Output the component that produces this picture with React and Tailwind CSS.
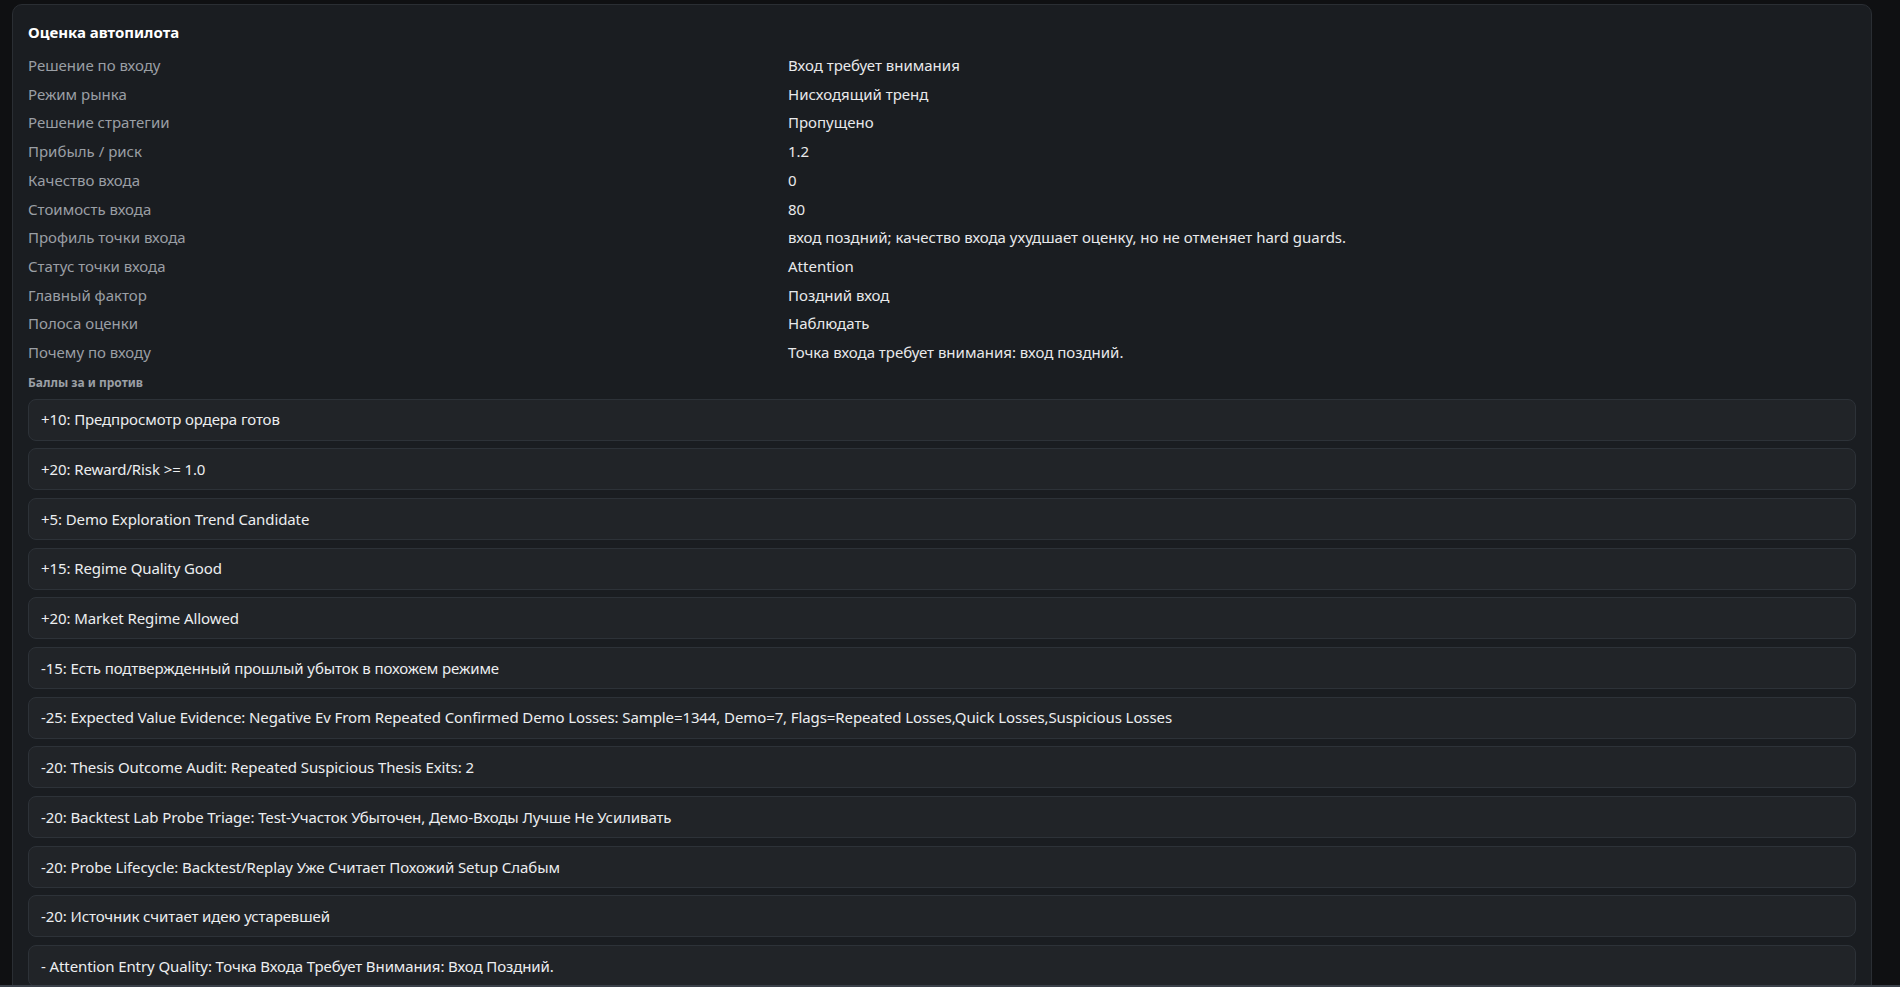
const rows = [
  ['Решение по входу', 'Вход требует внимания'],
  ['Режим рынка', 'Нисходящий тренд'],
  ['Решение стратегии', 'Пропущено'],
  ['Прибыль / риск', '1.2'],
  ['Качество входа', '0'],
  ['Стоимость входа', '80'],
  ['Профиль точки входа', 'вход поздний; качество входа ухудшает оценку, но не отменяет hard guards.'],
  ['Статус точки входа', 'Attention'],
  ['Главный фактор', 'Поздний вход'],
  ['Полоса оценки', 'Наблюдать'],
  ['Почему по входу', 'Точка входа требует внимания: вход поздний.'],
];

const scores = [
  '+10: Предпросмотр ордера готов',
  '+20: Reward/Risk >= 1.0',
  '+5: Demo Exploration Trend Candidate',
  '+15: Regime Quality Good',
  '+20: Market Regime Allowed',
  '-15: Есть подтвержденный прошлый убыток в похожем режиме',
  '-25: Expected Value Evidence: Negative Ev From Repeated Confirmed Demo Losses: Sample=1344, Demo=7, Flags=Repeated Losses,Quick Losses,Suspicious Losses',
  '-20: Thesis Outcome Audit: Repeated Suspicious Thesis Exits: 2',
  '-20: Backtest Lab Probe Triage: Test-Участок Убыточен, Демо-Входы Лучше Не Усиливать',
  '-20: Probe Lifecycle: Backtest/Replay Уже Считает Похожий Setup Слабым',
  '-20: Источник считает идею устаревшей',
  '- Attention Entry Quality: Точка Входа Требует Внимания: Вход Поздний.',
];

export default function App() {
  return (
    <div
      className="flex h-[987px] flex-col overflow-hidden bg-[#0f1012]"
      style={{ fontFamily: '"Noto Sans", "Open Sans", sans-serif' }}
    >
      <div className="min-h-0 flex-1 overflow-hidden pl-[12px] pr-[28px] pt-[4px]">
        <div className="rounded-[10px] border border-[#2a2e33] bg-[#1a1d21] px-[15px] pt-[15px] pb-6">
          <h2 className="text-[15px] font-bold leading-[24px] text-white">Оценка автопилота</h2>
          <div className="mt-[7px]">
            {rows.map(([label, value]) => (
              <div key={label} className="grid h-[28.7px] grid-cols-[760px_1fr] items-center text-[15px]">
                <span className="text-[#9a9fa5]">{label}</span>
                <span className="text-[#e8e9eb]">{value}</span>
              </div>
            ))}
          </div>
          <div className="mt-[7px] text-[12px] font-bold leading-[18px] text-[#9a9fa5]">Баллы за и против</div>
          <div className="mt-[7px] flex flex-col gap-[7.7px]">
            {scores.map((s, i) => (
              <div
                key={i}
                className="flex h-[42px] items-center rounded-lg border border-[#2d3238] bg-[#212428] px-[12px] text-[15px] tracking-[-0.1px] text-[#eceef0]"
              >
                {s}
              </div>
            ))}
          </div>
        </div>
      </div>
      <div className="h-[2px] shrink-0 bg-[#3a4049]" />
    </div>
  );
}
